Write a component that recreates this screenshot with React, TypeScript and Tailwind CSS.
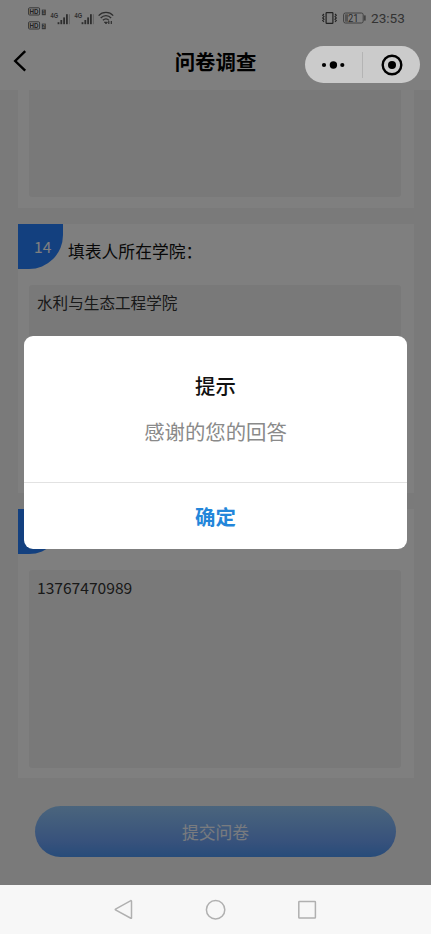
import type { ReactNode } from 'react';

interface QuestionProps {
  index: number;
  title: string;
  answer: string;
}

function SignalIcon({ label }: { label: string }) {
  return (
    <svg className="overflow-visible font-['Liberation_Sans',sans-serif]" width="21" height="15" viewBox="0 0 21 15" fill="#5c5c5c">
      <text x="-0.5" y="6.6" fontSize="8" fontWeight="700" textLength="7.6" lengthAdjust="spacingAndGlyphs">
        {label}
      </text>
      <rect x="6.6" y="11.2" width="1.8" height="2" />
      <rect x="9.4" y="9" width="1.8" height="4.2" />
      <rect x="12.2" y="6.4" width="1.8" height="6.8" />
      <rect x="15" y="3.2" width="1.8" height="10" />
      <rect x="17.9" y="3.2" width="1" height="10" opacity="0.35" />
    </svg>
  );
}

function HdIcon({ sim }: { sim: string }) {
  return (
    <svg className="overflow-visible font-['Liberation_Sans',sans-serif]" width="19" height="9" viewBox="0 0 19 9">
      <rect x="0.6" y="0.8" width="11" height="7.2" rx="1" fill="none" stroke="#5c5c5c" strokeWidth="0.9" />
      <text x="1.6" y="7" fontSize="7.4" fontWeight="700" fill="#444" textLength="9" lengthAdjust="spacingAndGlyphs">
        HD
      </text>
      <rect x="13.8" y="2.6" width="4" height="5.6" fill="#6c6c6c" />
      <text x="14.6" y="7" fontSize="4.5" fontWeight="700" fill="#d8d8d8">
        {sim}
      </text>
    </svg>
  );
}

function StatusBar() {
  return (
    <div className="flex h-[38px] items-start justify-between pl-7 pr-[26px]">
      <div className="flex">
        <div className="mt-[7px] flex w-[22px] flex-col gap-[5px]">
          <HdIcon sim="1" />
          <HdIcon sim="2" />
        </div>
        <div className="mt-[11px] flex gap-[3px] pl-px">
          <SignalIcon label="4G" />
          <SignalIcon label="4G" />
          <svg className="-ml-px" width="16" height="15" viewBox="0 0 16 15" fill="none" stroke="#5c5c5c" strokeWidth="1.3">
            <path d="M0.6 4.6C4.6 0.4 11.4 0.4 15.2 4.6" />
            <path d="M2.7 7C5.7 3.9 10.3 3.9 13.1 7" />
            <path d="M4.9 9.3C6.8 7.3 9.2 7.3 10.9 9.3" />
            <path d="M6.2 11L8 13L9.6 11.2Z" fill="#505050" strokeWidth="0.6" />
            <path d="M10.8 9.9v3M13.3 9.9v3" strokeWidth="1.2" />
          </svg>
        </div>
      </div>
      <div className="mt-[10px] flex h-4 items-center text-[#666]">
        <svg width="17" height="14" viewBox="0 0 17 14" fill="none" stroke="#444">
          <rect x="5.1" y="1.6" width="6.8" height="10.8" rx="0.6" strokeWidth="1.2" />
          <path d="M3 3L1.7 4.3L3 5.6L1.7 7L3 8.3L1.7 9.6L3 11" strokeWidth="1.1" />
          <path d="M14 3L15.3 4.3L14 5.6L15.3 7L14 8.3L15.3 9.6L14 11" strokeWidth="1.1" />
        </svg>
        <svg
          className="ml-[5px] overflow-visible font-[Roboto,sans-serif]"
          width="23"
          height="12"
          viewBox="0 0 23 12"
        >
          <rect x="0.6" y="1" width="19.6" height="10" rx="1.8" fill="none" stroke="#808080" strokeWidth="1" />
          <rect x="2" y="2.3" width="3" height="7.4" fill="#a8a8a8" />
          <text x="5" y="9.8" fontSize="10.5" fill="#555" textLength="10.5" lengthAdjust="spacingAndGlyphs">
            21
          </text>
          <rect x="21.3" y="3.4" width="1.2" height="5.2" fill="#555" />
        </svg>
        <span className="ml-[5px] w-[34px] font-[Roboto,sans-serif] text-[13.6px] leading-4">23:53</span>
      </div>
    </div>
  );
}

function Card({ children }: { children: ReactNode }) {
  return <section className="h-[269px] shrink-0 bg-white">{children}</section>;
}

function Answer({ children }: { children?: ReactNode }) {
  return (
    <div className="ml-[11px] mr-[13px] h-[198px] shrink-0 rounded-[3px] bg-[#f3f3f3] px-2 pt-[5px] text-[15.6px] leading-6 text-[#333]">
      {children}
    </div>
  );
}

function Question({ index, title, answer }: QuestionProps) {
  return (
    <Card>
      <div className="flex h-[61px]">
        <div className="h-[45px] w-[45px] rounded-br-[34px] bg-[#2680ff] pl-4 pt-[10px] text-[15.6px] leading-6 text-white">
          {index}
        </div>
        <h2 className="ml-[5px] mt-[15px] text-[16.8px] leading-6 text-[#111]">{title}</h2>
      </div>
      <Answer>{answer}</Answer>
    </Card>
  );
}

function Capsule() {
  return (
    <div className="absolute left-[305px] top-[46px] flex h-[37px] w-[115px] items-center rounded-full bg-[#cbcbcb]">
      <svg className="ml-4" width="25" height="10" viewBox="0 0 25 10">
        <circle cx="3" cy="5" r="2.1" />
        <circle cx="12.4" cy="5" r="3.7" />
        <circle cx="21.3" cy="5" r="2.1" />
      </svg>
      <div className="ml-4 h-[26px] w-px bg-[#b4b4b4]" />
      <svg className="ml-[18px]" width="22" height="22" viewBox="0 0 22 22">
        <circle cx="11" cy="11" r="9.3" fill="none" stroke="#000" strokeWidth="2.4" />
        <circle cx="11" cy="11" r="4" />
      </svg>
    </div>
  );
}

function Dialog() {
  return (
    <div className="absolute left-6 top-[336px] flex h-[213px] w-[383px] flex-col rounded-[9px] bg-white text-center">
      <div className="h-[147px] border-b border-[#e2e2e2] pt-[34px]">
        <h3 className="text-[20.4px] font-medium leading-[30px] text-[#111]">提示</h3>
        <p className="mt-4 text-[20.4px] font-normal leading-[30px] text-[#8a8a8a]">感谢的您的回答</p>
      </div>
      <button className="flex-1 text-[20.4px] font-bold leading-[30px] text-[#2386da]">确定</button>
    </div>
  );
}

function NavBar() {
  return (
    <nav className="flex h-[49px] items-center bg-[#f7f7f7]">
      <svg className="ml-[114px]" width="20" height="22" viewBox="0 0 20 22" fill="none" stroke="#b0b0b0" strokeWidth="1.5">
        <path d="M1.5 10.2L16.8 1.6Q17.5 1.5 17.5 2.2V18.9Q17.5 19.5 16.8 19.2L1.5 10.9Q1 10.5 1.5 10.2Z" />
      </svg>
      <svg className="ml-[71px]" width="22" height="22" viewBox="0 0 22 22" fill="none" stroke="#b0b0b0" strokeWidth="1.5">
        <circle cx="10.6" cy="10.8" r="9.2" />
      </svg>
      <svg className="ml-[71px]" width="20" height="22" viewBox="0 0 20 22" fill="none" stroke="#b0b0b0" strokeWidth="1.5">
        <rect x="0.8" y="2.4" width="16.6" height="16.6" rx="0.6" />
      </svg>
    </nav>
  );
}

export default function App() {
  return (
    <div className="relative flex h-[934px] w-[431px] flex-col overflow-hidden bg-[#f4f4f4] font-['Noto_Sans_CJK_SC',sans-serif]">
      <header className="h-[90px] shrink-0 bg-white">
        <StatusBar />
        <div className="relative flex h-[50px] items-center justify-center">
          <svg className="absolute left-3 top-3" width="16" height="22" viewBox="0 0 16 22" fill="none" stroke="#000" strokeWidth="2.4">
            <path d="M13.2 1.2L3.2 11L13.2 20.6" />
          </svg>
          <h1 className="pb-1 text-[20.4px] font-bold leading-[30px] text-black">问卷调查</h1>
        </div>
      </header>

      <main className="flex h-[795px] flex-col overflow-hidden pl-[18px] pr-[17px]">
        <div className="flex h-[118px] shrink-0 flex-col justify-end overflow-hidden bg-white pb-[11px]">
          <Answer />
        </div>
        <div className="mt-4 flex flex-col gap-4">
          <Question index={14} title="填表人所在学院：" answer="水利与生态工程学院" />
          <Question index={15} title="联系电话：" answer="13767470989" />
        </div>
        <button className="ml-[17px] mt-7 h-[51px] w-[361px] shrink-0 rounded-full bg-linear-to-b from-[#96cafa] via-[#6fa4f8] via-70% to-[#4e98f4] pt-0.5 text-[16.8px] text-white/90">
          提交问卷
        </button>
      </main>

      <div className="absolute inset-x-0 top-0 h-[885px] bg-black/50" />
      <Capsule />
      <Dialog />
      <NavBar />
    </div>
  );
}
